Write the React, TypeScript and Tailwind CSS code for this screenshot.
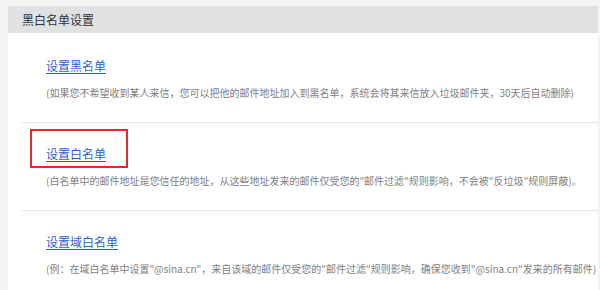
import React from "react";

const font = { fontFamily: '"Noto Sans CJK SC", "Noto Sans", sans-serif' };

function Section({
  link,
  desc,
  last,
  boxed,
}: {
  link: string;
  desc: string;
  last?: boolean;
  boxed?: boolean;
}) {
  return (
    <div className={`relative pl-[24px] pt-[23px] pb-[21px] ${last ? "" : "border-b border-[#e6e6e6]"}`}>
      {boxed && (
        <div className="absolute left-[8px] top-[6px] w-[98px] h-[39px] border-2 border-[#e8262b]" />
      )}
      <div className="h-[16px] leading-[16px] text-[12px]">
        <a className="text-[#2f5fcf] underline underline-offset-2 cursor-pointer">{link}</a>
      </div>
      <div className="mt-[11px] h-[16px] leading-[16px] text-[10px] text-[#808080] whitespace-nowrap">
        {desc}
      </div>
    </div>
  );
}

export default function App() {
  return (
    <div className="w-[600px] h-[290px] overflow-hidden bg-[#f4f4f4] pt-[6px] pl-[8px] pr-[2px]" style={font}>
      <div className="bg-white h-full">
        <div className="h-[27px] bg-[#dfe1e3] pl-[14px] flex items-center text-[12px] text-[#333]">
          黑白名单设置
        </div>
        <div className="pl-[14px] pt-[2px]">
          <Section
            link="设置黑名单"
            desc="(如果您不希望收到某人来信，您可以把他的邮件地址加入到黑名单，系统会将其来信放入垃圾邮件夹，30天后自动删除)"
          />
          <Section
            boxed
            link="设置白名单"
            desc={'(白名单中的邮件地址是您信任的地址，从这些地址发来的邮件仅受您的"邮件过滤"规则影响，不会被"反垃圾"规则屏蔽)。'}
          />
          <Section
            last
            link="设置域白名单"
            desc={'(例：在域白名单中设置"@sina.cn"，来自该域的邮件仅受您的"邮件过滤"规则影响，确保您收到"@sina.cn"发来的所有邮件)'}
          />
        </div>
      </div>
    </div>
  );
}
